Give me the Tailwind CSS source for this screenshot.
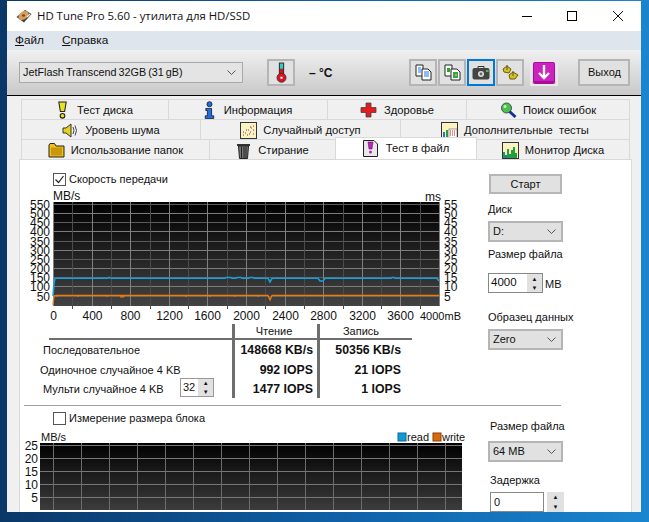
<!DOCTYPE html>
<html lang="ru">
<head>
    <meta charset="UTF-8">
    <title>HD Tune Pro 5.60</title>
    <script src="https://cdn.jsdelivr.net/npm/@tailwindcss/browser@4"></script>
</head>
<body class="w-[649px] h-[522px] overflow-hidden bg-gradient-to-r from-[#0a3768] via-[#0f5fa5] to-[#1a86cf] pt-[1px] pl-[7px] font-['Liberation_Sans',sans-serif] text-[11px] text-[#111]">

<div class="w-[634px] h-[511px] bg-[#f0f0f0] flex flex-col overflow-hidden">

    <!-- Заголовок -->
    <div class="h-[30px] shrink-0 bg-white flex items-center pl-[9px]">
        <svg class="w-[16px] h-[16px]" viewBox="0 0 16 16">
            <path d="M0.500 9 L9 2 L15.500 6 L8 14.500 Z" fill="#444"/>
            <ellipse cx="7.500" cy="7.500" rx="5.500" ry="3.800" transform="rotate(-35 7.500 7.500)" fill="#d9a05a"/>
            <ellipse cx="7.500" cy="7.500" rx="1.600" ry="1.200" fill="#7a5020"/>
            <path d="M11 9 L14 6" stroke="#eee" stroke-width="1.200"/>
        </svg>
        <span class="ml-[5px] font-['Open_Sans',sans-serif] text-[11.4px] text-[#111]">HD Tune Pro 5.60 - утилита для HD/SSD</span>
        <div class="ml-auto flex items-center">
            <span class="w-[10px] h-[1px] bg-black"></span>
            <span class="ml-[35px] w-[10px] h-[10px] border border-black"></span>
            <svg class="ml-[36px] mr-[18px] w-[10px] h-[10px]" viewBox="0 0 10 10"><path d="M0 0 L10 10 M10 0 L0 10" stroke="#111" fill="none"/></svg>
        </div>
    </div>

    <!-- Меню -->
    <div class="h-[19px] shrink-0 bg-[#dfe5ed] flex items-center pl-[8px] gap-[18px] text-[11.8px]">
        <span><u>Ф</u>айл</span>
        <span><u>С</u>правка</span>
    </div>

    <!-- Панель инструментов -->
    <div class="h-[46px] shrink-0 bg-gradient-to-b from-[#f0f0f0] to-[#c9c9c9] border-b border-black flex items-center pl-[12px]">
        <div class="w-[224px] h-[21px] border border-[#a9a9a9] bg-[#e4e4e4] flex items-center justify-between pl-[3px] pr-[6px]">
            <span class="text-[10.8px] [word-spacing:-1px]">JetFlash&#8201;Transcend 32GB (31 gB)</span>
            <svg class="w-[9px] h-[5px]" viewBox="0 0 9 5"><path d="M0.500 0.500 L4.500 4.500 L8.500 0.500" stroke="#555" fill="none"/></svg>
        </div>
        <div class="ml-[24px] w-[28px] h-[27px] border-2 border-[#b5b5b5] bg-[#e1e1e1] flex items-center justify-center">
            <svg class="w-[11px] h-[21px]" viewBox="0 0 10 20">
                <rect x="2.500" y="0.500" width="5" height="14" fill="#333"/>
                <rect x="3.500" y="1.500" width="3" height="5" fill="#3cc"/>
                <rect x="3.500" y="6.500" width="3" height="8" fill="#e01020"/>
                <circle cx="5" cy="15" r="4.300" fill="#e01020" stroke="#333" stroke-width="0.800"/>
                <rect x="4" y="14" width="2" height="2" fill="#fff"/>
            </svg>
        </div>
        <span class="ml-[14px] font-bold text-[12px]">– °C</span>
        <div class="ml-[77px] w-[28px] h-[27px] border-2 border-[#b5b5b5] bg-[#e1e1e1] flex items-center justify-center">
            <svg class="w-[17px] h-[17px]" viewBox="0 0 17 17">
                <path d="M1 1 H8 V12 H1 Z" fill="#fff" stroke="#222"/>
                <path d="M3 4 H6 M3 6 H6 M3 8 H6" stroke="#1f7ae0"/>
                <path d="M7 5 H13 L16 8 V16 H7 Z" fill="#fff" stroke="#222"/>
                <path d="M9 8 H14 M9 10 H14 M9 12 H14" stroke="#1f7ae0"/>
            </svg>
        </div>
        <div class="ml-[1px] w-[28px] h-[27px] border-2 border-[#b5b5b5] bg-[#e1e1e1] flex items-center justify-center">
            <svg class="w-[17px] h-[17px]" viewBox="0 0 17 17">
                <path d="M1 1 H8 V12 H1 Z" fill="#fff" stroke="#222"/>
                <rect x="3" y="4" width="3" height="4" fill="#2a2"/>
                <path d="M7 5 H13 L16 8 V16 H7 Z" fill="#fff" stroke="#222"/>
                <rect x="9" y="8" width="5" height="6" fill="#2aa84a"/>
                <rect x="11" y="10" width="2" height="2" fill="#e8a020"/>
            </svg>
        </div>
        <div class="ml-[1px] w-[28px] h-[27px] border-[2px] border-[#0078d7] bg-[#e1e1e1] flex items-center justify-center">
            <svg class="w-[18px] h-[14px]" viewBox="0 0 18 14">
                <path d="M6 2 V0.500 H12 V2" stroke="#333" fill="none"/>
                <rect x="0.500" y="2" width="17" height="11.500" rx="2" fill="#444"/>
                <circle cx="9" cy="8" r="3" fill="#ddd"/>
                <circle cx="9" cy="8" r="1.400" fill="#666"/>
                <rect x="14" y="4" width="2.500" height="2" fill="#3c3"/>
            </svg>
        </div>
        <div class="ml-[1px] w-[28px] h-[27px] border-2 border-[#b5b5b5] bg-[#e1e1e1] flex items-center justify-center">
            <svg class="w-[18px] h-[17px]" viewBox="0 0 18 17">
                <path d="M2 5 L6 2 L10 5 L8 9 L3 8 Z" fill="#d8c020" stroke="#6a6000"/>
                <path d="M8 11 L12 8 L17 11 L14 15 L9 15 Z" fill="#d8c020" stroke="#6a6000"/>
                <path d="M6 1 V6 M12 7 V12" stroke="#555"/>
            </svg>
        </div>
        <div class="ml-[6px] w-[28px] h-[27px] border-2 border-[#e8e8e8] flex items-center justify-center">
            <svg class="w-[22px] h-[22px]" viewBox="0 0 22 22">
                <rect width="22" height="22" rx="2" fill="#a5109a"/>
                <rect x="1" y="1" width="20" height="18" rx="1" fill="#cc22c0"/>
                <path d="M11 3 V16 M6 11 L11 16 L16 11" stroke="#fff" stroke-width="2.400" fill="none"/>
            </svg>
        </div>
        <div class="ml-[20px] w-[52px] h-[27px] border-2 border-[#b5b5b5] bg-[#e1e1e1] flex items-center justify-center">Выход</div>
    </div>

    <!-- Вкладки -->
    <div class="mt-[3px] pl-[14px] shrink-0 text-[11.200px]">
        <div class="flex h-[20px] w-[609px] border-t border-[#d9d9d9]">
            <div class="w-[148px] pt-[1px] border-l border-r border-[#d9d9d9] flex items-center justify-center gap-[9px]">
                <svg class="w-[11px] h-[18px]" viewBox="0 0 10 17"><path d="M1.500 1 H8.500 L7 10 H3 Z" fill="#e8e020" stroke="#222"/><circle cx="5" cy="14" r="2.200" fill="#e8e020" stroke="#222"/></svg>
                <span>Тест диска</span>
            </div>
            <div class="w-[159px] pt-[1px] border-r border-[#d9d9d9] flex items-center justify-center gap-[9px]">
                <svg class="w-[11px] h-[18px]" viewBox="0 0 10 17"><circle cx="5" cy="3" r="2.400" fill="#1f6ee0" stroke="#111" stroke-width="0.700"/><path d="M1.500 7 H7 V14 H9 V16.500 H1 V14 H3 V9 H1.500 Z" fill="#1f6ee0" stroke="#111" stroke-width="0.700"/></svg>
                <span>Информация</span>
            </div>
            <div class="w-[139px] pt-[1px] border-r border-[#d9d9d9] flex items-center justify-center gap-[7px]">
                <svg class="w-[17px] h-[16px]" viewBox="0 0 17 16"><path d="M6 1 H11 V5.500 H16 V10.500 H11 V15 H6 V10.500 H1 V5.500 H6 Z" fill="#e01c24" stroke="#444" stroke-width="0.800"/></svg>
                <span>Здоровье</span>
            </div>
            <div class="w-[163px] pt-[1px] border-r border-[#d9d9d9] flex items-center justify-center gap-[6px]">
                <svg class="w-[17px] h-[17px]" viewBox="0 0 17 17"><path d="M9 9 L15.500 15" stroke="#1030a0" stroke-width="3"/><circle cx="6.500" cy="6" r="5" fill="#4cc04c" stroke="#333" stroke-width="0.800"/><circle cx="5" cy="4.500" r="1.500" fill="#c8f0c8"/></svg>
                <span>Поиск ошибок</span>
            </div>
        </div>
        <div class="flex h-[20px] w-[609px] border-t border-[#d9d9d9]">
            <div class="w-[180px] pt-[1px] border-l border-r border-[#d9d9d9] flex items-center justify-center gap-[6px]">
                <svg class="w-[17px] h-[15px]" viewBox="0 0 17 15"><path d="M1 5 H4 L9 1 V14 L4 10 H1 Z" fill="#e8d020" stroke="#333"/><path d="M11 4 Q13 7.500 11 11 M13 2.500 Q16 7.500 13 12.500" stroke="#444" fill="none"/></svg>
                <span>Уровень шума</span>
            </div>
            <div class="w-[200px] pt-[1px] border-r border-[#d9d9d9] flex items-center justify-center gap-[6px]">
                <svg class="w-[17px] h-[17px]" viewBox="0 0 17 17"><rect x="0.500" y="0.500" width="16" height="16" fill="#fbf3c0" stroke="#333"/><path d="M3 13 h1 M5 11 h1 M7 13 h1 M8 8 h1 M10 10 h1 M11 6 h1 M13 4 h1 M13 12 h1" stroke="#d02020"/><path d="M3 10 h1 M6 8 h1 M9 12 h1 M10 5 h1 M13 8 h1" stroke="#2040c0"/></svg>
                <span>Случайный доступ</span>
            </div>
            <div class="w-[229px] pt-[1px] border-r border-[#d9d9d9] flex items-center justify-center gap-[6px]">
                <svg class="w-[17px] h-[17px]" viewBox="0 0 17 17"><rect x="0.500" y="0.500" width="16" height="16" fill="#fbf3c0" stroke="#333"/><rect x="2" y="10" width="2" height="6" fill="#2a6ee0"/><rect x="5" y="8" width="2" height="8" fill="#22a040"/><rect x="8" y="7" width="8" height="9" fill="#fff" stroke="#444" stroke-width="0.500"/><path d="M9 9 h6 M9 11 h6 M9 13 h6" stroke="#d02020" stroke-dasharray="1 1"/></svg>
                <span>Дополнительные&nbsp; тесты</span>
            </div>
        </div>
        <div class="flex h-[20px] w-[609px] border-t border-[#d9d9d9]">
            <div class="w-[189px] pt-[1px] border-l border-r border-[#d9d9d9] flex items-center justify-center gap-[6px]">
                <svg class="w-[17px] h-[16px]" viewBox="0 0 17 16"><path d="M1 3 V15 H16 V4 H8 L6.500 1.500 H2 Z" fill="#f0c020" stroke="#222"/><rect x="3" y="5.500" width="11" height="8" fill="#c89808"/></svg>
                <span>Использование папок</span>
            </div>
            <div class="w-[125px] pt-[1px] flex items-center justify-center gap-[7px]">
                <svg class="w-[15px] h-[17px]" viewBox="0 0 15 17"><rect x="1" y="2" width="13" height="2" fill="#333"/><path d="M2.500 4 H12.500 L11.500 16.500 H3.500 Z" fill="#777" stroke="#222"/><path d="M5.500 5 V16 M8 5 V16 M10 5 V16" stroke="#222"/></svg>
                <span>Стирание</span>
            </div>
            <div class="w-[142px] h-[22px] -mt-[3px] bg-white border-l border-r border-t border-[#d9d9d9] relative z-10 flex items-center justify-center gap-[8px]">
                <svg class="w-[15px] h-[17px]" viewBox="0 0 15 17"><path d="M0.500 0.500 H11 L14.500 4 V16.500 H0.500 Z" fill="#e8e8e8" stroke="#222"/><path d="M5 2 H10 L9 9 H6 Z" fill="#c020c0" stroke="#401040" stroke-width="0.500"/><circle cx="7.500" cy="12" r="1.500" fill="#c020c0"/></svg>
                <span>Тест в файл</span>
            </div>
            <div class="w-[153px] pt-[1px] border-r border-[#d9d9d9] flex items-center justify-center gap-[6px]">
                <svg class="w-[17px] h-[17px]" viewBox="0 0 17 17"><rect x="0.500" y="0.500" width="16" height="16" fill="#fbf3c0" stroke="#333"/><path d="M1 16 V10 H3 V13 H5 V7 H7 V12 H9 V8 H11 V5 H13 V11 H15 V16 Z" fill="#22a040"/><rect x="3" y="13" width="2" height="3" fill="#2a6ee0"/></svg>
                <span>Монитор Диска</span>
            </div>
        </div>
    </div>

    <!-- Содержимое вкладки -->
    <div class="ml-[12px] mr-[9px] flex-1 min-h-0 bg-white border-l border-r border-t border-[#d9d9d9] overflow-hidden flex flex-col">

        <!-- Тест в файл: верхняя часть -->
        <div class="h-[245px] shrink-0 flex">
            <div class="w-[468px] shrink-0">
                <label class="flex items-center ml-[33px] mt-[13px] h-[13px]">
                    <span class="w-[13px] h-[13px] border border-[#555] flex items-center justify-center">
                        <svg class="w-[11px] h-[11px]" viewBox="0 0 11 11"><path d="M1.500 5.500 L4.500 8.500 L9.500 2" stroke="#222" stroke-width="1.200" fill="none"/></svg>
                    </span>
                    <span class="ml-[3px]">Скорость передачи</span>
                </label>
                <svg id="chartTop" class="block mt-[4px] w-[445px] h-[132px]" viewBox="20 190 445 132"></svg>
                <!-- Таблица результатов -->
                <div class="mt-[2px]">
                    <div class="grid grid-cols-[212px_85px_95px] h-[14px]">
                        <div></div>
                        <div class="border-l-[3px] border-[#6e6e6e] text-center leading-[14px] pr-[4px]">Чтение</div>
                        <div class="border-l-[3px] border-[#6e6e6e] text-center leading-[14px] pr-[10px]">Запись</div>
                    </div>
                    <div class="ml-[29px] w-[363px] h-[2px] bg-[#6e6e6e]"></div>
                    <div class="grid grid-cols-[212px_85px_95px] h-[20px] items-stretch">
                        <div class="pl-[23px] leading-[20px]">Последовательное</div>
                        <div class="border-l-[3px] border-[#6e6e6e] text-right pr-[4px] font-bold text-[12.300px] leading-[20px]">148668 KB/s</div>
                        <div class="border-l-[3px] border-[#6e6e6e] text-right pr-[11px] font-bold text-[12.300px] leading-[20px]">50356 KB/s</div>
                    </div>
                    <div class="grid grid-cols-[212px_85px_95px] h-[20px] items-stretch">
                        <div class="pl-[20px] leading-[20px]">Одиночное случайное 4 KB</div>
                        <div class="border-l-[3px] border-[#6e6e6e] text-right pr-[4px] font-bold text-[12.300px] leading-[20px]">992 IOPS</div>
                        <div class="border-l-[3px] border-[#6e6e6e] text-right pr-[11px] font-bold text-[12.300px] leading-[20px]">21 IOPS</div>
                    </div>
                    <div class="grid grid-cols-[212px_85px_95px] h-[18px] items-stretch">
                        <div class="pl-[23px] flex items-start">
                            <span class="w-[137px] shrink-0 leading-[18px]">Мульти случайное 4 KB</span>
                            <span class="w-[34px] h-[19px] -mt-[2px] shrink-0 border border-[#999] bg-white flex items-center">
                                <span class="w-[18px] pl-[2px]">32</span>
                                <span class="w-[15px] h-[17px] bg-[#e1e1e1] flex flex-col items-center justify-around text-[6px] leading-[6px]"><span>▲</span><span>▼</span></span>
                            </span>
                        </div>
                        <div class="border-l-[3px] border-[#6e6e6e] text-right pr-[4px] font-bold text-[12.300px] leading-[18px]">1477 IOPS</div>
                        <div class="border-l-[3px] border-[#6e6e6e] text-right pr-[11px] font-bold text-[12.300px] leading-[18px]">1 IOPS</div>
                    </div>
                </div>
            </div>
            <div class="flex flex-col items-start">
                <div class="mt-[14px] ml-[1px] w-[73px] h-[20px] border-2 border-[#b5b5b5] bg-[#e1e1e1] flex items-center justify-center">Старт</div>
                <div class="mt-[8px] leading-[14px]">Диск</div>
                <div class="mt-[5px] w-[75px] h-[21px] border-2 border-[#b5b5b5] bg-[#e1e1e1] flex items-center justify-between pl-[3px] pr-[5px]">
                    <span>D:</span>
                    <svg class="w-[9px] h-[5px]" viewBox="0 0 9 5"><path d="M0.500 0.500 L4.500 4.500 L8.500 0.500" stroke="#555" fill="none"/></svg>
                </div>
                <div class="mt-[5px] leading-[14px]">Размер файла</div>
                <div class="mt-[12px] flex items-center">
                    <div class="w-[55px] h-[20px] border border-[#888] bg-white flex items-center">
                        <span class="w-[38px] pl-[2px] text-[11.500px]">4000</span>
                        <span class="w-[15px] h-[18px] bg-[#e1e1e1] flex flex-col items-center justify-around text-[6px] leading-[6px]"><span>▲</span><span>▼</span></span>
                    </div>
                    <span class="ml-[2px] mt-[2px]">MB</span>
                </div>
                <div class="mt-[17px] leading-[14px]">Образец данных</div>
                <div class="mt-[5px] w-[75px] h-[21px] border-2 border-[#b5b5b5] bg-[#e1e1e1] flex items-center justify-between pl-[3px] pr-[5px]">
                    <span>Zero</span>
                    <svg class="w-[9px] h-[5px]" viewBox="0 0 9 5"><path d="M0.500 0.500 L4.500 4.500 L8.500 0.500" stroke="#555" fill="none"/></svg>
                </div>
            </div>
        </div>

        <div class="ml-[4px] w-[537px] h-[1px] shrink-0 bg-[#a0a0a0]"></div>

        <!-- Измерение размера блока -->
        <div class="flex-1 min-h-0 flex">
            <div class="w-[468px] shrink-0">
                <label class="flex items-center ml-[33px] mt-[6px] h-[13px]">
                    <span class="w-[13px] h-[13px] border border-[#555]"></span>
                    <span class="ml-[3px]">Измерение размера блока</span>
                </label>
                <svg id="chartBottom" class="block mt-[3px] w-[450px] h-[82px]" viewBox="20 428 450 82"></svg>
            </div>
            <div class="flex flex-col items-start">
                <div class="mt-[13px] ml-[2px] leading-[14px]">Размер файла</div>
                <div class="mt-[8px] w-[75px] h-[21px] border-2 border-[#b5b5b5] bg-[#e1e1e1] flex items-center justify-between pl-[3px] pr-[5px]">
                    <span>64 MB</span>
                    <svg class="w-[9px] h-[5px]" viewBox="0 0 9 5"><path d="M0.500 0.500 L4.500 4.500 L8.500 0.500" stroke="#555" fill="none"/></svg>
                </div>
                <div class="mt-[11px] ml-[2px] leading-[14px]">Задержка</div>
                <div class="mt-[5px] ml-[2px] flex">
                    <div class="w-[54px] h-[20px] border border-[#888] bg-white pl-[3px] leading-[18px]">0</div>
                    <span class="ml-[3px] w-[17px] h-[20px] bg-[#e1e1e1] flex flex-col items-center justify-around text-[6px] leading-[6px]"><span>▲</span><span>▼</span></span>
                </div>
            </div>
        </div>
    </div>
</div>

<script>
    const NS = 'http://www.w3.org/2000/svg';

    const add = (svg, tag, attrs, text) => {
        const el = document.createElementNS(NS, tag);
        Object.keys(attrs).forEach(k => el.setAttribute(k, attrs[k]));
        if (text !== undefined) el.textContent = text;
        svg.appendChild(el);
        return el;
    };

    const label = (svg, x, y, text, anchor, size) => add(svg, 'text', {
        x: x, y: y, 'text-anchor': anchor || 'start', 'font-size': size || 12,
        'font-family': 'Liberation Sans', fill: '#111'
    }, text);

    const gradient = (svg, id, bottom) => {
        const defs = add(svg, 'defs', {});
        const g = add(defs, 'linearGradient', {id: id, x1: 0, y1: 0, x2: 0, y2: 1});
        add(g, 'stop', {offset: 0, 'stop-color': '#000'});
        add(g, 'stop', {offset: 1, 'stop-color': bottom});
    };

    // Верхний график
    const chartTop = document.getElementById('chartTop');
    gradient(chartTop, 'g1', '#434343');
    add(chartTop, 'rect', {x: 53, y: 202, width: 386, height: 104, fill: 'url(#g1)'});
    for (let i = 1; i <= 11; i++) {
        const y = Math.round(304.8 - i * 9.17) + 0.5;
        add(chartTop, 'line', {x1: 53, x2: 439, y1: y, y2: y, stroke: i % 2 ? '#5a5a5a' : '#7c7c7c'});
        label(chartTop, 50, y + 4, i * 50, 'end');
        label(chartTop, 444, y + 4, i * 5);
    }
    for (let i = 0; i <= 20; i++) {
        const x = Math.round(53 + i * 19.3) + 0.5;
        add(chartTop, 'line', {x1: x, x2: x, y1: 202, y2: i % 2 ? 309 : 306, stroke: i % 2 ? '#4c4c4c' : '#808080'});
        if (i % 2 === 0 && i < 20) label(chartTop, x, 320, i * 200, 'middle');
    }
    label(chartTop, 420, 320, '4000mB', 'start', 11);
    label(chartTop, 53, 200, 'MB/s');
    label(chartTop, 425, 201, 'ms');
    add(chartTop, 'polyline', {fill: 'none', stroke: '#f07c0c', 'stroke-width': 1.3, points:
        '53,305 54,296 56,295.500 268,295.500 270,300 272,295.500 439,295.500'});
    add(chartTop, 'path', {fill: 'none', stroke: '#f07c0c', d:
        'M57 297v-1 M78 297v-1 M107 296v1 M120 296h4v1h-4 M186 296v1 M210 296v1 M235 296v1 M258 296v1'});
    add(chartTop, 'polyline', {fill: 'none', stroke: '#18a0dc', 'stroke-width': 1.6, points:
        '53,296 54,283 55,278.300 108,278.300 109,277.500 111,278.300 225,278.300 226,277.500 231,277.500 232,278.300 236,278.300 237,277.500 241,277.500 242,278.300 249,278.300 250,277.500 253,277.500 254,278.300 268,278.300 270,282 272,278.300 318,278.300 320,281 323,281 325,278.300 391,278.300 392,277.500 394,277.500 395,278.300 437,278.300 439,281'});

    // Нижний график
    const chartBottom = document.getElementById('chartBottom');
    gradient(chartBottom, 'g2', '#3c3c3c');
    add(chartBottom, 'rect', {x: 40, y: 443, width: 422, height: 67, fill: 'url(#g2)'});
    [25, 20, 15, 10, 5].forEach((v, i) => {
        const y = 445.5 + i * 13;
        add(chartBottom, 'line', {x1: 40, x2: 462, y1: y, y2: y, stroke: '#777'});
        label(chartBottom, 38, y + 4.5, v, 'end');
    });
    for (let x = 53.5; x < 462; x += 28) {
        add(chartBottom, 'line', {x1: x, x2: x, y1: 443, y2: 510, stroke: '#6c6c6c'});
    }
    label(chartBottom, 41, 441, 'MB/s', 'start', 11);
    add(chartBottom, 'rect', {x: 398, y: 433, width: 8, height: 8, fill: '#0f9ad6', stroke: '#0a6a96'});
    label(chartBottom, 407, 441, 'read', 'start', 11);
    add(chartBottom, 'rect', {x: 433, y: 433, width: 8, height: 8, fill: '#d9690b', stroke: '#8a4006'});
    label(chartBottom, 442, 441, 'write', 'start', 11);
</script>

</body>
</html>
